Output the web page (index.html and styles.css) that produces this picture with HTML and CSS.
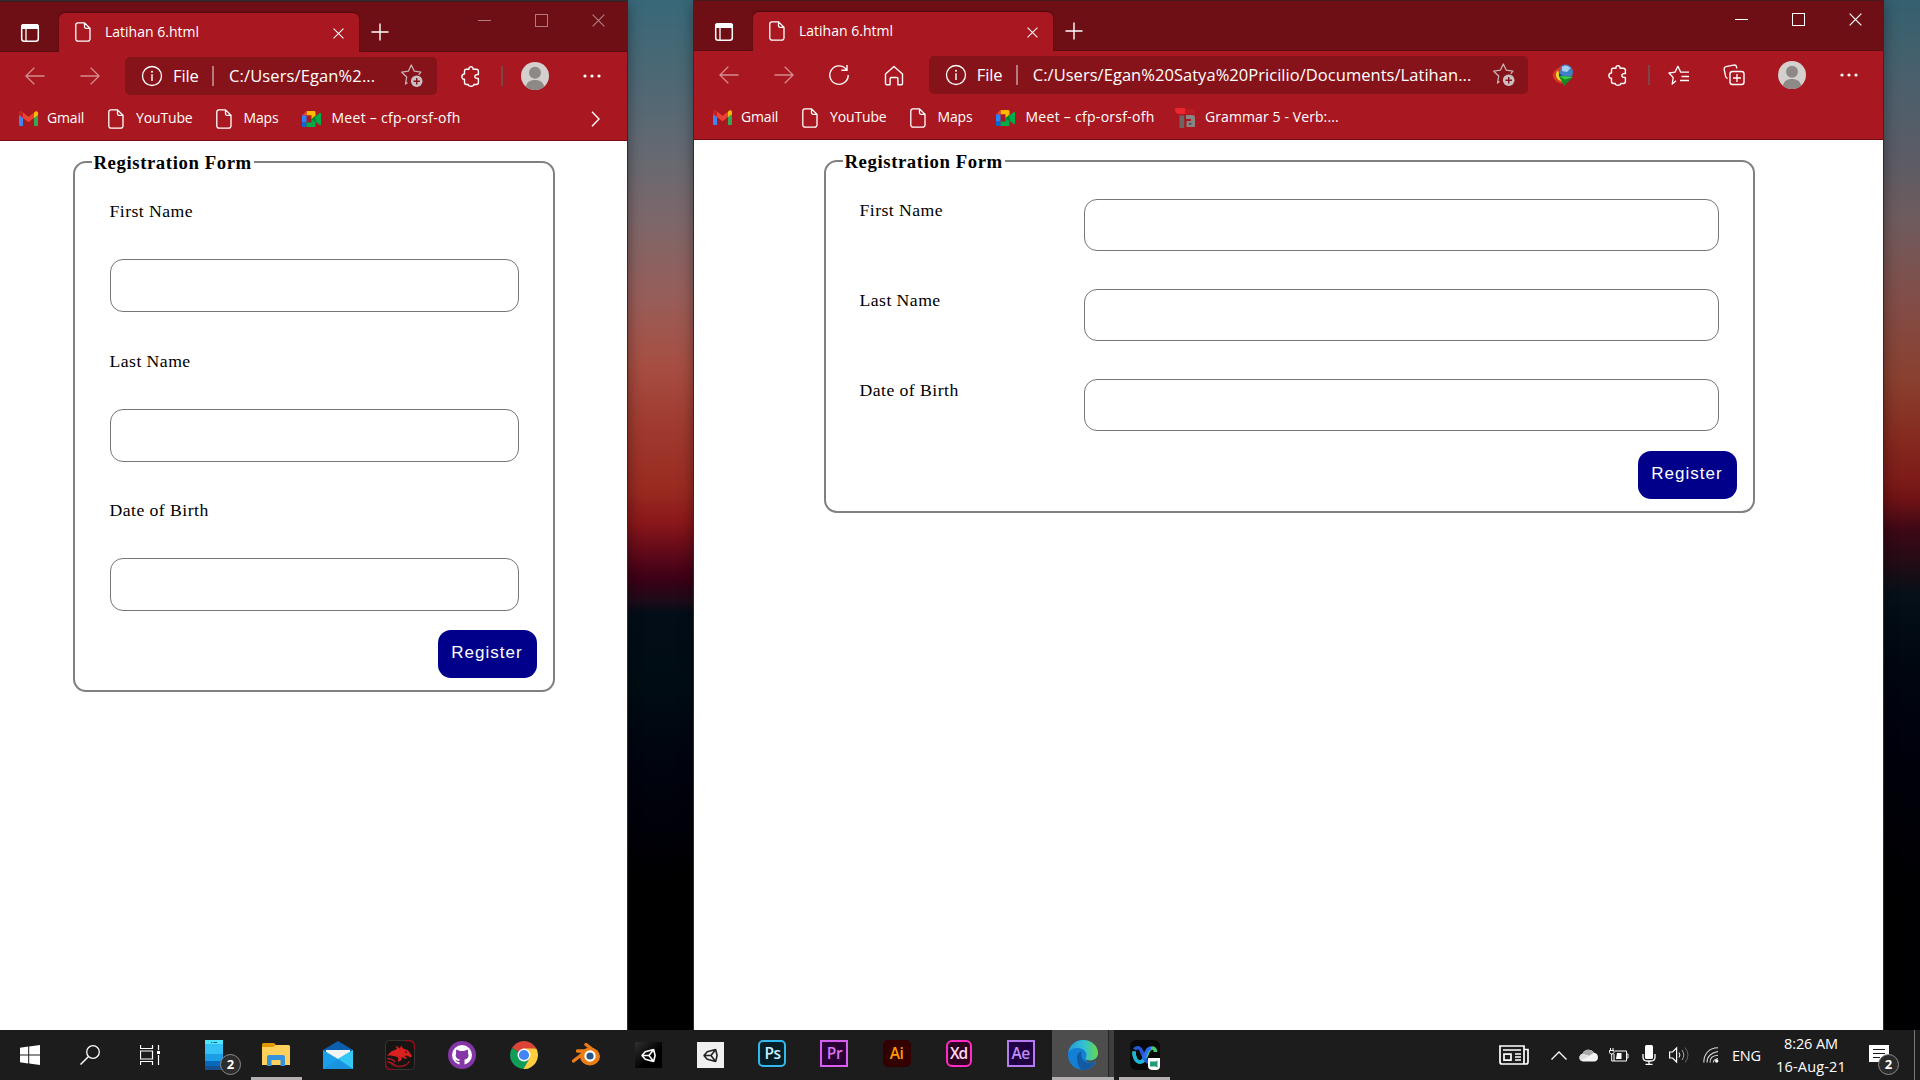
FILE: index.html
```html
<!DOCTYPE html>
<html lang="en">
<head>
<meta charset="utf-8">
<title>Latihan 6.html</title>
<link rel="stylesheet" href="styles.css">
</head>
<body>
<svg class="sprite" aria-hidden="true">
  <symbol id="panel" viewBox="0 0 20 20"><rect x="1.7" y="1.7" width="16.6" height="16.6" rx="2.5" fill="none" stroke="#fff" stroke-width="1.5"/><path d="M1 6V3.5A2.5 2.5 0 0 1 3.500 1h13A2.500 2.500 0 0 1 19 3.500V6z" fill="#fff"/><path d="M6 6v12" stroke="#fff" stroke-width="1.300"/></symbol>
  <symbol id="page" viewBox="0 0 16 20"><path d="M3 .8h6.500L15 6.300V17a2.200 2.200 0 0 1-2.200 2.200H3A2.200 2.200 0 0 1 .8 17V3A2.200 2.200 0 0 1 3 .8zM9.500 1v3.800a1.500 1.500 0 0 0 1.500 1.500h4" fill="none" stroke="#fff" stroke-width="1.300"/></symbol>
  <symbol id="x" viewBox="0 0 14 14"><path d="M.7.7l12.600 12.600M13.300.7.7 13.300" fill="none" stroke="currentColor" stroke-width="1.300"/></symbol>
  <symbol id="plus" viewBox="0 0 18 18"><path d="M9 .5v17M.5 9h17" stroke="#fff" stroke-width="1.400"/></symbol>
  <symbol id="arrow" viewBox="0 0 20 18"><path d="M19.500 9H1M9.300.8.9 9l8.400 8.200" fill="none" stroke="currentColor" stroke-width="1.300"/></symbol>
  <symbol id="reload" viewBox="0 0 22 22"><path d="M18.300 5.500A9.200 9.200 0 1 0 20.200 11M19 1v5.300h-5.600" fill="none" stroke="#fff" stroke-width="1.400"/></symbol>
  <symbol id="home" viewBox="0 0 20 21"><path d="M1.500 9 10 1.500 18.500 9v9.500a1.200 1.200 0 0 1-1.200 1.200h-3.400v-6a1.200 1.200 0 0 0-1.200-1.200H7.300a1.200 1.200 0 0 0-1.200 1.200v6H2.700a1.200 1.200 0 0 1-1.200-1.200z" fill="none" stroke="#fff" stroke-width="1.400" stroke-linejoin="round"/></symbol>
  <symbol id="info" viewBox="0 0 22 22"><circle cx="11" cy="11" r="9.500" fill="none" stroke="#fff" stroke-width="1.300"/><path d="M11 9.300v6.700" stroke="#fff" stroke-width="1.400"/><circle cx="11" cy="6.700" r="1" fill="#fff"/></symbol>
  <symbol id="star-add" viewBox="0 0 24 24"><path d="M7.500 18.500 5.500 20l1.200-7-5-4.800 6.600-1L11.300 1l3 6.200 6.600 1-2.200 2.600" fill="none" stroke="#c6b1b3" stroke-width="1.300" stroke-linejoin="round"/><circle cx="16.700" cy="17.200" r="5.800" fill="#c9bfc0"/><path d="M16.700 14v6.400M13.500 17.200h6.400" stroke="#861219" stroke-width="1.400"/></symbol>
  <symbol id="puzzle" viewBox="0 0 20 21"><path d="M5 3.200h3C7.700 1.400 9 .8 10 .8s2.300.6 2 2.400h3.200c1.500 0 2.200.8 2.200 2v3.300c-2-.3-3.600.5-3.600 2s1.600 2.300 3.600 2v4c0 1.200-.7 2-2.200 2h-2.400c.1 1-.9 1.700-2.800 1.700s-2.900-.7-2.800-1.700H5.500c-1.300 0-2-.8-2-2v-3.300C2 13.500.9 12.200.9 10.800S2 8 3.500 8V5.200c0-1.200.5-2 1.500-2z" fill="none" stroke="#fff" stroke-width="1.400" stroke-linejoin="round"/></symbol>
  <symbol id="avatar" viewBox="0 0 28 28"><circle cx="14" cy="14" r="14" fill="#d4d0ce"/><circle cx="14" cy="10.800" r="6" fill="#8d8986"/><path d="M5 24.700C5.300 20.500 9 18 14 18s8.700 2.500 9 6.700A14 14 0 0 1 5 24.700z" fill="#8d8986"/></symbol>
  <symbol id="dots" viewBox="0 0 18 4"><circle cx="2" cy="2" r="1.600" fill="#fff"/><circle cx="9" cy="2" r="1.600" fill="#fff"/><circle cx="16" cy="2" r="1.600" fill="#fff"/></symbol>
  <symbol id="star-list" viewBox="0 0 22 21"><path d="M8 15.800 4.200 19l1-6.500L1 8l6-.9L9.900 1.300l2.800 5.800H21M13.500 11.500H21M12 15.500h9" fill="none" stroke="#fff" stroke-width="1.300" stroke-linejoin="round"/></symbol>
  <symbol id="collect" viewBox="0 0 22 22"><rect x="7" y="7.500" width="14" height="13" rx="2.500" fill="none" stroke="#fff" stroke-width="1.400"/><path d="M14 10v8M10 14h8M4.600 14.500C3 14.500 2.800 13.300 2.500 12L1.200 5.500C.8 3.600 1.800 3 3 2.700l7.500-1.600C12.500.7 13.300 1.600 13.500 3l.4 1.500" fill="none" stroke="#fff" stroke-width="1.300"/></symbol>
  <symbol id="gmail" viewBox="0 0 19 15"><path d="M0 3v10.500C0 14.500.5 15 1.500 15H4V6z" fill="#4285f4"/><path d="M15 6v9h2.500c1 0 1.500-.5 1.500-1.500V3z" fill="#34a853"/><path d="M15 1.700 16.300.6C17.500-.3 19 .5 19 2v2l-4 3z" fill="#fbbc04"/><path d="M0 4V2C0 .5 1.500-.3 2.700.6L9.500 5.800 15 1.700V7l-5.500 4.200L4 7z" fill="#ea4335"/><path d="M0 4V2C0 .5 1.500-.3 2.700.6L4 1.700V7z" fill="#c5221f"/></symbol>
  <symbol id="meet" viewBox="0 0 19 16"><path d="M4.500 0H12c1 0 1.500.5 1.500 1.500V8h-4V4.200h-5z" fill="#ffba00"/><path d="M0 4.500 4.500 0v4.500z" fill="#ea4335"/><path d="M0 4.500h4.500v7H0z" fill="#2684fc"/><path d="M0 11.500h4.500V16h-3C.5 16 0 15.500 0 14.500z" fill="#0066da"/><path d="M4.500 11.500h5V8h4v6.500c0 1-.5 1.500-1.500 1.500H4.500z" fill="#00ac47"/><path d="M13.500 5.500 17.500 2c.9-.6 1.500-.2 1.500.7v10.600c0 .9-.6 1.300-1.500.7l-4-3.500z" fill="#00ac47"/><path d="M9.500 8l4-3.500v7z" fill="#00832d"/></symbol>
  <symbol id="grammar" viewBox="0 0 20 20"><path d="M0 0h10v6H4Q0 6 0 0z" fill="#ed2530"/><path d="M10 1h10v5H10z" fill="#b91b22"/><path d="M4.500 7.500h4.700V20H4.500z" fill="#6d6466"/><path d="M11 7h6.500A2.500 2.500 0 0 1 20 9.500V19h-8.500v-6H16v-2h-5z" fill="#898384"/><path d="M14 15h2.500v1.500H14z" fill="#4b4446"/></symbol>
  <symbol id="idm" viewBox="0 0 22 22"><circle cx="13.500" cy="8" r="7.500" fill="#3f7fc4"/><path d="M10 3Q14-.5 18.500 4L15 8l-5-1z" fill="#a8cdf0"/><path d="M9 3C2 5 -1 11 2 15s8 6 11 3L7 12z" fill="#dc3a20"/><path d="M6 6.500c-4 4-2 9.500 5 11.500l2-2-5-4z" fill="#f3d92b"/><path d="M7 9c-1 4 2 8 7 8l-1-3z" fill="#1d3c78"/><path d="M7 12l14 1-9 9z" fill="#138a26"/><path d="M7 12l14 1-8 2.500z" fill="#43cc40"/></symbol>
  <symbol id="unity" viewBox="0 0 16 16"><path d="M1 8 4.500 4 13.500 1.500 15 8l-1.500 6.500L4.500 12zM1 8h7.500M8.500 8l5-6.500M8.500 8l5 6.500" fill="none" stroke="currentColor" stroke-width="1.700" stroke-linejoin="bevel"/></symbol>
</svg>

<main class="desktop">
  <section class="window window-narrow">
    <header class="tabstrip">
      <svg class="panel"><use href="#panel"/></svg>
      <div class="tab"><svg class="page"><use href="#page"/></svg><span class="tab-title">Latihan 6.html</span><svg class="tab-close"><use href="#x"/></svg></div>
      <svg class="new-tab"><use href="#plus"/></svg>
      <div class="controls"><i class="min"></i><i class="max"></i><svg class="close"><use href="#x"/></svg></div>
    </header>
    <div class="toolbar">
      <nav class="navrow">
        <span class="nav"><svg class="arrow"><use href="#arrow"/></svg></span>
        <span class="nav"><svg class="arrow forward"><use href="#arrow"/></svg></span>
        <div class="address"><svg class="info"><use href="#info"/></svg><span class="scheme">File</span><i class="bar"></i><span class="url">C:/Users/Egan%2...</span><svg class="star-add"><use href="#star-add"/></svg></div>
        <div class="actions">
          <svg class="puzzle"><use href="#puzzle"/></svg><i class="sep"></i>
          <svg class="avatar"><use href="#avatar"/></svg><svg class="dots"><use href="#dots"/></svg>
        </div>
      </nav>
      <div class="bookmarks">
        <span class="bm bm-gmail"><svg><use href="#gmail"/></svg><span>Gmail</span></span>
        <span class="bm bm-youtube"><svg><use href="#page"/></svg><span>YouTube</span></span>
        <span class="bm bm-maps"><svg><use href="#page"/></svg><span>Maps</span></span>
        <span class="bm bm-meet"><svg><use href="#meet"/></svg><span>Meet – cfp-orsf-ofh</span></span>
        <svg class="more" viewBox="0 0 9 16"><path d="M1 .7 8 8l-7 7.300" fill="none" stroke="#fff" stroke-width="1.400"/></svg>
      </div>
    </div>
    <form class="page-body">
      <fieldset>
        <legend>Registration Form</legend>
        <div class="field"><label>First Name</label><input type="text"></div>
        <div class="field"><label>Last Name</label><input type="text"></div>
        <div class="field"><label>Date of Birth</label><input type="text"></div>
        <button type="button">Register</button>
      </fieldset>
    </form>
  </section>

  <section class="window window-wide">
    <header class="tabstrip">
      <svg class="panel"><use href="#panel"/></svg>
      <div class="tab"><svg class="page"><use href="#page"/></svg><span class="tab-title">Latihan 6.html</span><svg class="tab-close"><use href="#x"/></svg></div>
      <svg class="new-tab"><use href="#plus"/></svg>
      <div class="controls"><i class="min"></i><i class="max"></i><svg class="close"><use href="#x"/></svg></div>
    </header>
    <div class="toolbar">
      <nav class="navrow">
        <span class="nav"><svg class="arrow"><use href="#arrow"/></svg></span>
        <span class="nav"><svg class="arrow forward"><use href="#arrow"/></svg></span>
        <span class="nav"><svg class="reload"><use href="#reload"/></svg></span>
        <span class="nav"><svg class="home"><use href="#home"/></svg></span>
        <div class="address"><svg class="info"><use href="#info"/></svg><span class="scheme">File</span><i class="bar"></i><span class="url">C:/Users/Egan%20Satya%20Pricilio/Documents/Latihan...</span><svg class="star-add"><use href="#star-add"/></svg></div>
        <div class="actions">
          <svg class="idm"><use href="#idm"/></svg>
          <svg class="puzzle"><use href="#puzzle"/></svg><i class="sep"></i>
          <svg class="star-list"><use href="#star-list"/></svg>
          <svg class="collect"><use href="#collect"/></svg>
          <svg class="avatar"><use href="#avatar"/></svg><svg class="dots"><use href="#dots"/></svg>
        </div>
      </nav>
      <div class="bookmarks">
        <span class="bm bm-gmail"><svg><use href="#gmail"/></svg><span>Gmail</span></span>
        <span class="bm bm-youtube"><svg><use href="#page"/></svg><span>YouTube</span></span>
        <span class="bm bm-maps"><svg><use href="#page"/></svg><span>Maps</span></span>
        <span class="bm bm-meet"><svg><use href="#meet"/></svg><span>Meet – cfp-orsf-ofh</span></span>
        <span class="bm bm-grammar"><svg><use href="#grammar"/></svg><span>Grammar 5 - Verb:...</span></span>
      </div>
    </div>
    <form class="page-body">
      <fieldset>
        <legend>Registration Form</legend>
        <div class="field"><label>First Name</label><input type="text"></div>
        <div class="field"><label>Last Name</label><input type="text"></div>
        <div class="field"><label>Date of Birth</label><input type="text"></div>
        <button type="button">Register</button>
      </fieldset>
    </form>
  </section>
</main>

<footer class="taskbar">
  <div class="system">
    <svg width="20" height="20" viewBox="0 0 20 20"><path d="M0 2.800 8.200 1.600v7.900H0zM9.200 1.400 20 0v9.500H9.200zM0 10.500h8.200v7.900L0 17.200zM9.200 10.500H20V20L9.200 18.600z" fill="#fff"/></svg>
    <svg width="20" height="20" viewBox="0 0 20 20"><circle cx="13" cy="7" r="6.300" fill="none" stroke="#fff" stroke-width="1.300"/><path d="M8.500 11.500.5 19.500" stroke="#fff" stroke-width="1.500"/></svg>
    <svg width="20" height="20" viewBox="0 0 20 20"><path d="M.5 0v3.500h12V0M.5 20v-3.500h12V20M.5 6h12v8H.5zM18.500 0v5M18.500 10v10" fill="none" stroke="#fff" stroke-width="1.200"/><path d="M17 6h3v3h-3z" fill="#fff"/></svg>
  </div>
  <div class="apps">
    <div class="app phone"><svg width="18" height="30" viewBox="0 0 18 30"><rect width="18" height="30" rx="1" fill="#35c1f5"/><path d="M0 0h18v4H0z" fill="#50e6ff"/><path d="M0 14h18v7H0z" fill="#1c9de4"/><path d="M0 21h18v5H0z" fill="#0669bc"/><path d="M0 26h18v3a1 1 0 0 1-1 1H1a1 1 0 0 1-1-1z" fill="#17508e"/><path d="M6 2.500h1.300M8.500 2.500H12" stroke="#17508e"/></svg><b class="count">2</b></div>
    <div class="app running"><svg width="28" height="24" viewBox="0 0 28 24"><path d="M0 1.500Q0 0 1.500 0H12l2 2v6H0z" fill="#e09a00"/><path d="M0 4h11l3-2h12.500Q28 2 28 3.500V22H0z" fill="#ffd05c"/><path d="M5 23V14q0-2 2-2h14q2 0 2 2v9h-4.500v-6h-9v6z" fill="#3592dc"/></svg></div>
    <div class="app"><svg width="30" height="28" viewBox="0 0 30 28"><path d="M0 9 15 0l15 9v4H0z" fill="#0c5eae"/><path d="M3 9h24v10H3z" fill="#f4f4f4"/><path d="M0 9v19h30V9L15 18z" fill="#1aa0e8"/><path d="M30 9v19L15 18z" fill="#35c8f5"/><path d="M0 28h30L15 18z" fill="#1b94df"/></svg></div>
    <div class="app"><svg width="30" height="30" viewBox="0 0 30 30"><rect x=".5" y=".5" width="29" height="29" rx="4" fill="#171414" stroke="#383333"/><path d="M21 .7h5l3.500 3.500v5M.7 21v5l3.500 3.500h5" fill="none" stroke="#8d0d1b" stroke-width="1.500"/><path d="M1.500 15.500C4 14.500 5 11.500 8.500 10.500L12 9l-1.500-3.500L15 8.500l1-3 2.500 3.500c3 0 5 1.500 6.500 4l2 3-1.500 1.500-3.500-2-2.500.5 2.500 2-1 1-4.500-2c1 2.500-1 4.500-4 4.500 1-1.500 1-2.500.5-4-2.500-1.500-6-2-11-2z" fill="#d9211f"/><path d="M2 18.500c4 0 6 1 8 3.500M2.500 22c3 0 5 1.500 8 3.500 5 2 11 .5 14-4" fill="none" stroke="#b81a1e" stroke-width="1.300"/><path d="M6 24c5 4 13 4 17-1" fill="none" stroke="#86141a"/><path d="M20 11.500l2 1" stroke="#171414"/></svg></div>
    <div class="app"><svg width="28" height="28" viewBox="0 0 28 28"><circle cx="14" cy="14" r="14" fill="#8435a6"/><circle cx="14" cy="14" r="10" fill="#fff"/><path d="M8.500 8.500 12 10h4l3.500-1.500c.7 1.300.7 2.500.4 3.500 1.600 3.500-.3 6-3.400 6.500V23.700a10 10 0 0 1-5 0V21c-2.500.5-3.500-1-4.200-2.200 1.600.3 2 1.600 4.200 1l.3-1.300c-3.200-.7-5-3-3.600-6.500-.3-1-.3-2.200.3-3.500z" fill="#8435a6"/></svg></div>
    <div class="app"><svg width="28" height="28" viewBox="0 0 28 28"><path d="M14 14 1.900 7A14 14 0 0 1 26.100 7z" fill="#db4437"/><path d="M14 14 1.900 7A14 14 0 0 0 14 28l6-10.500z" fill="#0f9d58"/><path d="M14 7.500h12.400A14 14 0 0 1 13.500 28l6-10.500z" fill="#ffcd40"/><circle cx="14" cy="14" r="6.500" fill="#fff"/><circle cx="14" cy="14" r="5.100" fill="#4285f4"/></svg></div>
    <div class="app"><svg width="28" height="24" viewBox="0 0 28 24"><path d="M1.500 18 15 7.500M5.500 8h14M14 1.500l9 7" fill="none" stroke="#ea7d16" stroke-width="3.400" stroke-linecap="round"/><ellipse cx="18" cy="13.500" rx="10" ry="9" fill="#ea7d16"/><circle cx="18" cy="13" r="5.700" fill="#fff"/><circle cx="18" cy="13" r="3.600" fill="#265787"/></svg></div>
    <div class="app"><span class="unity unity-dark"><svg><use href="#unity"/></svg></span></div>
    <div class="app"><span class="unity unity-light"><svg><use href="#unity"/></svg></span></div>
    <div class="app"><span class="adobe ps">Ps</span></div>
    <div class="app"><span class="adobe pr">Pr</span></div>
    <div class="app"><span class="adobe ai">Ai</span></div>
    <div class="app"><span class="adobe xd">Xd</span></div>
    <div class="app"><span class="adobe ae">Ae</span></div>
    <div class="app active"><svg width="30" height="30" viewBox="0 0 30 30"><defs><linearGradient id="eg" x1="0" x2="1"><stop offset=".1" stop-color="#279fdd"/><stop offset=".55" stop-color="#35c1d0"/><stop offset="1" stop-color="#66d94a"/></linearGradient></defs><circle cx="15" cy="15" r="15" fill="#137fd5"/><path d="M0 14C1 5 8 0 15 0c9 0 15 6 15 13 0 5-4 7.500-8 7.500-3 0-5.500-1-4-3C20 13 16 8 9.500 8 4 8 .5 11 0 14z" fill="url(#eg)"/><path d="M9 17c0-3 2-5 5-6-2.500 5 1 12 8 12 3 0 4.500-1 5.800-1.500C25 27 20 30 15 30c-4 0-6-7-6-13z" fill="#135aa5"/><path d="M30 15v8l-2.500-1.500q-4 2-8 .5l-2-2.500q3 1.500 6 1 5.500-1 6.500-5.500z" fill="#4d4d4d"/></svg></div>
    <div class="app running"><svg width="30" height="30" viewBox="0 0 30 30"><rect width="30" height="30" rx="6" fill="#090909"/><path d="M4 11.500C4 18 6.500 22 10 22s5.500-4 7-8 3.500-6 5.500-6 3 2 3 4" fill="none" stroke="#49c76b" stroke-width="3.600"/><path d="M4 11.500C4 18 6.500 22 10 22c1.500 0 3-1 4-2.500" fill="none" stroke="#1ab4dc" stroke-width="3.600"/><path d="M4.500 9.500C6 7 9.500 7 11 10l3 7c1.200 3 3 5 5 5" fill="none" stroke="#2456d8" stroke-width="3.600"/><path d="M13.500 19c2-3 2.500-11 7.500-11" fill="none" stroke="#2d6cf0" stroke-width="3.600"/><path d="M18 18h12v8q0 4-4 4h-3q-5 0-5-4z" fill="#fff"/><path d="M20 21.500h5.500l2-1v7l-2-1H20z" fill="#229b7b"/></svg></div>
  </div>
  <div class="tray">
    <svg class="t-news" viewBox="0 0 30 20"><path d="M1 1h24v18H3q-2 0-2-2zM25 4.500h4V17q0 2-2 2h-3" fill="none" stroke="#fff" stroke-width="1.700"/><path d="M4 5h18M16 9h6M16 12h6M16 15h6" stroke="#fff" stroke-width="1.300"/><path d="M5 9.200h7v6H5z" fill="none" stroke="#fff" stroke-width="1.700"/></svg>
    <svg class="t-chevron" viewBox="0 0 16 9"><path d="M.5 8.500 8 1l7.500 7.500" fill="none" stroke="#fff" stroke-width="1.300"/></svg>
    <svg class="t-cloud" viewBox="0 0 20 13"><path d="M4 12.500a4 4 0 0 1-.5-7.800A6.500 6.500 0 0 1 15 3.800a4.500 4.500 0 0 1 1 8.700z" fill="#f4f4f4"/><path d="M3.500 4.700A6.500 6.500 0 0 1 15 3.800l-5 3z" fill="#aaa"/><path d="M3.500 4.700 10 7.500l-8.500 4A4 4 0 0 1 3.500 4.700z" fill="#ddd"/></svg>
    <svg class="t-battery" viewBox="0 0 20 14"><path d="M5 6V13h12.500V3H6M17.500 6H19v4h-1.500M1.500 0v2M4 0v2M.5 2.500h4.500v2q0 1.500-2.200 1.500T.5 4.500zM2.700 6v7H5" fill="none" stroke="#fff"/><path d="M8 5h4.500v6H7z" fill="#fff"/></svg>
    <svg class="t-mic" viewBox="0 0 14 20"><rect x="3" width="8" height="14" rx="1.500" fill="#fff"/><path d="M1 9v3q0 4 4 4h4q4 0 4-4V9M7 16v3M3.500 19.300h7" fill="none" stroke="#fff" stroke-width="1.300"/></svg>
    <svg class="t-sound" viewBox="0 0 21 18"><path d="M.6 6h3l4-4v14l-4-4h-3z" fill="none" stroke="#fff" stroke-width="1.200"/><path d="M10 6.500q1.800 2.500 0 5" fill="none" stroke="#fff"/><path d="M13 4q3.600 5 0 10" fill="none" stroke="#aaa"/><path d="M16 1.500q6 7.500 0 15" fill="none" stroke="#666"/></svg>
    <svg class="t-wifi" viewBox="0 0 16 16"><path d="M.8 15.500Q.8 9 4.500 5T15 .8M4 15.500q0-4.500 2.700-7.200T15 4.500M7 15.500q0-3.500 2-5.300t6-2M10.300 15.500q0-3 4.700-4" fill="none" stroke="#ddd" stroke-width="1.100"/><circle cx="13.700" cy="14" r="1.700" fill="#fff"/></svg>
    <span class="lang">ENG</span>
    <div class="clock"><span class="time">8:26 AM</span><span class="date">16-Aug-21</span></div>
    <div class="notices"><svg width="20" height="20" viewBox="0 0 20 20"><path d="M0 0h20v17h-7l-3 3v-3H0z" fill="#fff"/><path d="M4 4.500h12M4 8.500h12M4 12.500h7" stroke="#1c1c1c"/></svg><b class="count">2</b></div>
    <i class="edge"></i>
  </div>
</footer>
</body>
</html>
```
FILE: styles.css
```css
* { box-sizing: border-box; }
body {
  margin: 0;
  width: 1920px;
  height: 1080px;
  overflow: hidden;
  display: flex;
  flex-direction: column;
  background: #000;
  font-family: "Open Sans", "Noto Sans", sans-serif;
}
svg { display: block; flex: none; }
i { display: block; flex: none; }
.sprite { position: absolute; width: 0; height: 0; }

.desktop {
  position: relative;
  flex: 1;
  overflow: hidden;
  background:
    linear-gradient(#34606f 0, #48606d 70px, #5d5c65 165px, #6f5b5d 220px, #824d48 300px, #89402f 380px, #86291f 440px, #7d1b18 480px, #6f1215 500px, #3d0815 530px, #250b15 560px, #051018 595px, #000710 660px, #00000b 760px, #000002 900px) right / 60px 100% no-repeat,
    linear-gradient(#386878 0, #4d6874 80px, #696971 165px, #7d676a 220px, #985d58 300px, #a74e42 365px, #a03c31 420px, #992a20 490px, #8a171a 523px, #600919 553px, #3b0016 580px, #1b0b18 602px, #030d17 613px, #000c13 690px, #00050f 750px, #000009 830px, #000 890px);
}

/* Browser windows */
.window {
  position: absolute;
  display: flex;
  flex-direction: column;
  background: #fff;
  box-shadow: 0 0 0 1px #2c2c2e, 0 3px 14px rgba(0, 0, 0, .45);
}
.window-narrow { left: 0; top: 1px; width: 627px; height: 1029px; }
.window-wide { left: 694px; top: 0; width: 1189px; height: 1030px; }

.tabstrip {
  display: flex;
  height: 51px;
  padding: 11px 0 0 20px;
  background: #6e0f16;
  border-top: 1px solid #45181c;
  box-shadow: inset 0 -1px #5a0c12;
}
.panel { width: 20px; height: 20px; margin: 10px 19px 0 0; }
.tab {
  display: flex;
  align-items: center;
  width: 300px;
  height: 39px;
  padding: 0 15px 1px 16px;
  border-radius: 6px 6px 0 0;
  background: #a91820;
  box-shadow: 0 -1px 2px #4e080e;
  clip-path: inset(-3px -3px 0 -3px);
}
.page { width: 16px; height: 20px; }
.tab-title { flex: 1; margin-left: 14px; padding-bottom: 1px; color: #fff; font-size: 14px; letter-spacing: 0; white-space: nowrap; }
.tab-close { width: 11px; height: 11px; color: #fff; margin-top: 2px; }
.new-tab { width: 18px; height: 18px; margin: 10px 0 0 12px; }
.controls {
  display: flex;
  align-items: center;
  gap: 44px;
  height: 14px;
  margin: 0 22px 0 auto;
  color: #fff;
}
.window-narrow .controls { opacity: .45; }
.window-wide .controls { margin-right: 21px; }
.min { width: 13px; height: 1px; background: #fff; }
.max { width: 13px; height: 13px; border: 1px solid #fff; }
.close { width: 13px; height: 13px; }

.toolbar { height: 89px; background: #a91820; border-bottom: 1px solid #740d14; }
.navrow { display: flex; align-items: center; height: 48px; padding-left: 7px; }
.nav { display: flex; justify-content: center; width: 55px; color: #fff; }
.window-wide .nav { width: 55.2px; }
.arrow { width: 20px; height: 18px; opacity: .5; }
.forward { transform: scaleX(-1); }
.reload { width: 22px; height: 22px; }
.home { width: 20px; height: 21px; }
.address {
  display: flex;
  align-items: center;
  width: 312px;
  height: 38px;
  margin: 0 0 0 8px;
  padding-left: 16px;
  border-radius: 5px;
  background: #87131a;
  color: #fff;
  font-size: 16.500px;
  white-space: nowrap;
}
.window-wide .address { width: 599px; margin-left: 7px; }
.info { width: 22px; height: 22px; }
.scheme { width: 39px; margin-left: 10px; padding-bottom: 2px; letter-spacing: -.1px; }
.bar { width: 2px; height: 20px; margin-right: 15px; background: #b87a7e; }
.url { width: 171px; padding-bottom: 2px; letter-spacing: .12px; }
.window-wide .url { width: 459px; letter-spacing: .04px; }
.star-add { width: 24px; height: 24px; }
.actions { display: flex; align-items: center; margin-left: auto; }
.window-narrow .actions { padding-right: 26px; }
.window-wide .actions { padding-right: 25px; }
.puzzle { width: 20px; height: 21px; }
.sep { width: 2px; height: 20px; margin: 0 18px 0 20px; background: #7e4448; }
.avatar { width: 28px; height: 28px; }
.dots { width: 18px; height: 4px; margin-left: 34px; }
.idm { width: 22px; height: 22px; margin-right: 34px; }
.star-list { width: 22px; height: 21px; margin-right: 33px; }
.collect { width: 22px; height: 22px; margin-right: 33px; }

.bookmarks { display: flex; align-items: center; height: 38px; padding: 0 0 1px 19px; }
.bm { display: flex; align-items: center; color: #fff; font-size: 14px; letter-spacing: -.15px; white-space: nowrap; }
.bm span { padding-bottom: 2px; }
.bm svg { width: 16px; height: 20px; margin-right: 12px; }
.bm-gmail { width: 89px; }
.bm-youtube { width: 107.500px; }
.bm-maps { width: 86px; }
.bm-meet { width: 179.500px; letter-spacing: .28px; }
.bm-grammar { letter-spacing: .1px; }
.bm-gmail svg { width: 19px; height: 15px; margin-right: 9px; }
.bm-meet svg { width: 19px; height: 16px; margin-right: 11px; }
.bm-grammar svg { width: 20px; height: 20px; margin-right: 10px; }
.more { width: 9px; height: 16px; margin-left: 110px; }

/* Registration form */
.page-body { display: flex; justify-content: center; padding-top: 10px; font-family: "Liberation Serif", serif; color: #000; }
fieldset {
  display: flex;
  flex-direction: column;
  width: 482px;
  height: 541px;
  margin: 0;
  padding: 2px 16px 12px 35px;
  border: 2px solid #808080;
  border-radius: 13px;
}
.window-wide .page-body { padding-left: 1px; }
.window-wide fieldset { width: 931px; height: 363px; padding: 3px 16px 12px 34px; }
legend { margin-left: -18px; padding: 2px 2px 0; font-size: 18.750px; line-height: 19px; font-weight: bold; letter-spacing: .58px; }
.window-wide legend { margin-left: -17px; }
.field { height: 149.500px; margin-right: 18px; }
label { display: block; font-size: 17.700px; line-height: 22px; letter-spacing: .45px; }
input {
  display: block;
  width: 100%;
  height: 53px;
  border: 1px solid #767676;
  border-radius: 13px;
  background: #fff;
  outline: 0;
}
.window-narrow .field { padding-top: 26px; }
.window-narrow input { margin-top: 37px; }
.window-wide .field { display: grid; grid-template-columns: 224px 1fr; height: 90px; padding-top: 25px; }
.window-wide input { height: 52px; }
button {
  align-self: flex-end;
  width: 99px;
  height: 48px;
  margin-top: auto;
  padding: 0 0 2px;
  border: 0;
  border-radius: 13px;
  background: #00008b;
  color: #fff;
  font: 17px "Liberation Sans", sans-serif;
  letter-spacing: 1px;
}

/* Taskbar */
.taskbar { display: flex; flex: none; height: 50px; background: #1c1c1c; }
.system { display: flex; align-items: center; width: 183px; padding-left: 20px; gap: 40px; }
.apps { display: flex; }
.app { display: flex; align-items: center; justify-content: center; width: 62.050px; position: relative; }
.running { background: linear-gradient(#b5b0b0, #b5b0b0) center bottom / 51px 3px no-repeat; }
.active { background: linear-gradient(#b5b0b0, #b5b0b0) left bottom / 100% 3px no-repeat, linear-gradient(90deg, #4d4d4d 56px, #252525 56px, #252525 57px, #3e3e3e 57px); }
.count {
  position: absolute;
  right: 4px;
  top: 24px;
  width: 21px;
  height: 21px;
  border: 1px solid #8b8b8b;
  border-radius: 50%;
  background: #2d2d2d;
  color: #fff;
  font-size: 13px;
  line-height: 19px;
  text-align: center;
}
.unity { display: flex; align-items: center; justify-content: center; width: 27px; height: 26px; }
.unity svg { width: 15px; height: 15px; }
.unity-dark { background: linear-gradient(135deg, #303030, #000 60%); color: #fff; }
.unity-light { background: #efefef; color: #222; }
.adobe { width: 28px; height: 27px; margin-bottom: 3px; border: 2px solid; text-align: center; font-size: 15.500px; line-height: 22px; font-weight: 600; letter-spacing: -.5px; }
.ps { border-color: #31b8ed; border-radius: 5px; background: #061e27; color: #c9f0ff; }
.pr { border-color: #d75ff0; background: #2a0034; color: #d777f5; }
.ai { border-color: #330000; border-radius: 5px; background: #330000; color: #ff9a00; }
.xd { width: 26px; border-color: #ff2bc2; border-radius: 6px; background: #2e001f; color: #ffd9f5; letter-spacing: -1px; }
.ae { border-color: #b57bf0; background: #1f0040; color: #bd8cf7; }

.tray { display: flex; align-items: center; margin-left: auto; color: #fff; }
.t-news { width: 30px; height: 20px; margin-right: 22px; }
.t-chevron { width: 16px; height: 9px; margin-right: 12px; }
.t-cloud { width: 20px; height: 13px; margin-right: 10px; }
.t-battery { width: 20px; height: 14px; margin-right: 13px; }
.t-mic { width: 14px; height: 20px; margin-right: 13px; }
.t-sound { width: 21px; height: 18px; margin-right: 13px; }
.t-wifi { width: 16px; height: 16px; margin-right: 13px; }
.lang { width: 44px; font-size: 14.500px; letter-spacing: -.2px; }
.clock { display: flex; flex-direction: column; align-items: center; width: 70px; font-size: 14.500px; line-height: 23px; letter-spacing: -.1px; white-space: nowrap; }
.date { letter-spacing: .15px; }
.notices { position: relative; width: 45px; height: 50px; padding: 15px 0 0 23px; }
.notices .count { right: -8px; background: #2a2a2a; }
.edge { width: 1px; height: 50px; margin: 0 5px 0 23px; background: #777; }
```
